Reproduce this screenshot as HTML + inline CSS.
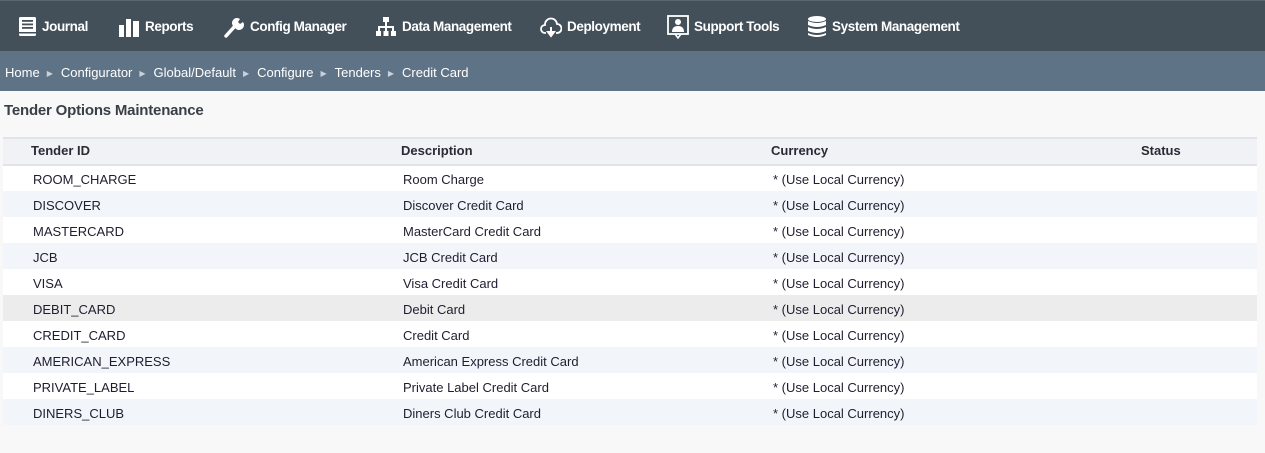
<!DOCTYPE html>
<html><head><meta charset="utf-8"><style>
*{margin:0;padding:0;box-sizing:border-box}
body{width:1265px;height:453px;background:#f8f8f8;font-family:"Liberation Sans",Arial,sans-serif;overflow:hidden;position:relative}
.nav{position:absolute;left:0;top:0;width:1265px;height:51px;background:#434f59;border-top:1px solid #5a6670}
.nav .it{position:absolute;top:0;height:51px;display:flex;align-items:center;color:#fff;font-weight:bold;font-size:13.5px;letter-spacing:-0.4px}
.nav svg{margin-right:5px}
.bc{position:absolute;left:0;top:51px;width:1265px;height:40px;background:#5f7387;color:#fff;font-size:13px;line-height:43px;padding-left:5px}
.bc .a{display:inline-block;margin:0 8px 0 7px;font-size:8px;color:#c8d0d8;vertical-align:1px}
h1{position:absolute;left:4px;top:102px;font-size:15px;color:#3a3f47;font-weight:bold;letter-spacing:-0.2px}
table{position:absolute;left:3px;top:137px;width:1254px;border-collapse:collapse;font-size:13px;color:#1e1e30}
th{background:#f1f2f6;height:27px;text-align:left;font-weight:bold;border-top:2px solid #e1e3e8;border-bottom:2px solid #e1e3e8;color:#2a2a35;font-size:13px;padding-top:0;padding-bottom:2px}
td{height:26px;background:#fff;padding-top:2px;padding-left:2px}
tr.s td{background:#f2f5fa}
tr.g td{background:#ececec}
</style></head><body>
<div class="nav">
 <div class="it" style="left:18px"><svg width="19" height="22" viewBox="0 0 19 22"><rect x="1" y="1" width="17" height="19" rx="1.5" fill="#fff"/><rect x="4" y="4" width="11" height="1.8" fill="#434f59"/><rect x="4" y="7.5" width="11" height="1.8" fill="#434f59"/><rect x="4" y="11" width="11" height="1.8" fill="#434f59"/><rect x="1" y="16" width="17" height="1.5" fill="#434f59"/></svg>Journal</div>
 <div class="it" style="left:118px"><svg width="22" height="20" viewBox="0 0 22 20"><rect x="1" y="8" width="5" height="12" fill="#fff"/><rect x="8" y="2" width="5" height="18" fill="#fff"/><rect x="15" y="4" width="6" height="16" fill="#fff"/></svg>Reports</div>
 <div class="it" style="left:223px"><svg width="22" height="22" viewBox="0 0 22 22"><path d="M3 20 L12 10" stroke="#fff" stroke-width="3.5" stroke-linecap="round"/><path d="M11 11 A5 5 0 0 1 17 3 L15 6 L17 8 L20 6 A5 5 0 0 1 12 12Z" fill="#fff"/></svg>Config Manager</div>
 <div class="it" style="left:375px"><svg width="22" height="22" viewBox="0 0 22 22" fill="#fff"><rect x="8" y="1" width="6" height="5"/><rect x="10" y="6" width="2" height="5"/><rect x="3" y="10" width="16" height="2"/><rect x="3" y="10" width="2" height="5"/><rect x="10" y="10" width="2" height="5"/><rect x="17" y="10" width="2" height="5"/><rect x="1" y="15" width="5" height="5"/><rect x="8.5" y="15" width="5" height="5"/><rect x="16" y="15" width="5" height="5"/></svg>Data Management</div>
 <div class="it" style="left:540px"><svg width="22" height="22" viewBox="0 0 22 22"><path d="M6 17 H5 A4 4 0 0 1 5 9 A6 6 0 0 1 17 8 A4.5 4.5 0 0 1 17 17 H16" stroke="#fff" stroke-width="1.8" fill="none"/><path d="M11 11 V19 M8 16 L11 20 L14 16Z" stroke="#fff" stroke-width="2" fill="#fff"/></svg>Deployment</div>
 <div class="it" style="left:667px"><svg width="22" height="24" viewBox="0 0 22 24"><rect x="1" y="1" width="20" height="18" fill="none" stroke="#fff" stroke-width="1.8"/><circle cx="11" cy="7" r="3" fill="#fff"/><path d="M5 17 Q5 11 11 11 Q17 11 17 17Z" fill="#fff"/><path d="M8 19 L11 23 L14 19" fill="none" stroke="#fff" stroke-width="1.5"/></svg>Support Tools</div>
 <div class="it" style="left:807px"><svg width="20" height="24" viewBox="0 0 20 24" fill="#fff"><ellipse cx="10" cy="4" rx="9" ry="3"/><path d="M1 6 Q10 10 19 6 V10 Q10 14 1 10Z"/><path d="M1 12 Q10 16 19 12 V16 Q10 20 1 16Z"/><path d="M1 18 Q10 22 19 18 V20 Q10 24 1 20Z"/></svg>System Management</div>
</div>
<div class="bc">Home<span class="a">▶</span>Configurator<span class="a">▶</span>Global/Default<span class="a">▶</span>Configure<span class="a">▶</span>Tenders<span class="a">▶</span>Credit Card</div>
<h1>Tender Options Maintenance</h1>
<table>
<colgroup><col style="width:28px"><col style="width:370px"><col style="width:370px"><col style="width:370px"><col></colgroup>
<tr><th></th><th>Tender ID</th><th>Description</th><th>Currency</th><th>Status</th></tr>
<tr><td></td><td>ROOM_CHARGE</td><td>Room Charge</td><td>* (Use Local Currency)</td><td></td></tr>
<tr class="s"><td></td><td>DISCOVER</td><td>Discover Credit Card</td><td>* (Use Local Currency)</td><td></td></tr>
<tr><td></td><td>MASTERCARD</td><td>MasterCard Credit Card</td><td>* (Use Local Currency)</td><td></td></tr>
<tr class="s"><td></td><td>JCB</td><td>JCB Credit Card</td><td>* (Use Local Currency)</td><td></td></tr>
<tr><td></td><td>VISA</td><td>Visa Credit Card</td><td>* (Use Local Currency)</td><td></td></tr>
<tr class="g"><td></td><td>DEBIT_CARD</td><td>Debit Card</td><td>* (Use Local Currency)</td><td></td></tr>
<tr><td></td><td>CREDIT_CARD</td><td>Credit Card</td><td>* (Use Local Currency)</td><td></td></tr>
<tr class="s"><td></td><td>AMERICAN_EXPRESS</td><td>American Express Credit Card</td><td>* (Use Local Currency)</td><td></td></tr>
<tr><td></td><td>PRIVATE_LABEL</td><td>Private Label Credit Card</td><td>* (Use Local Currency)</td><td></td></tr>
<tr class="s"><td></td><td>DINERS_CLUB</td><td>Diners Club Credit Card</td><td>* (Use Local Currency)</td><td></td></tr>
</table>
</body></html>
